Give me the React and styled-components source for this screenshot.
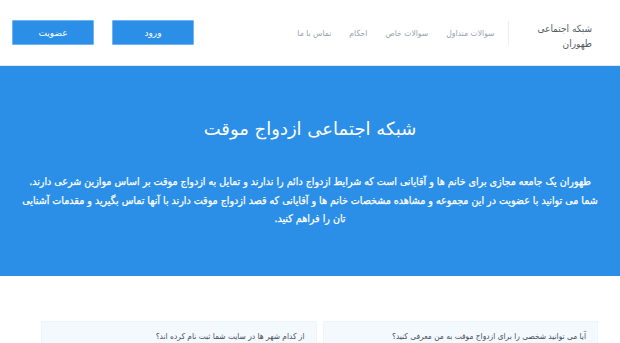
import React from "react";
import styled, { createGlobalStyle } from "styled-components";

const Global = createGlobalStyle`
  html, body { margin: 0; padding: 0; background: #fff; }
  body { font-family: "DejaVu Sans", "Noto Sans", sans-serif; direction: rtl; overflow: hidden; }
  * { box-sizing: border-box; }
`;

const Header = styled.header`
  height: 66px;
  display: flex;
  align-items: center;
  padding: 0 28px 0 12px;
  border-bottom: 1px solid #e3e6ea;
`;

const Logo = styled.div`
  display: flex;
  flex-direction: column;
  align-items: flex-start;
  font-family: "DejaVu Sans Condensed", "DejaVu Sans", sans-serif;
  font-size: 10px;
  line-height: 15px;
  color: #555b63;
  margin-top: 6px;
`;

const Divider = styled.div`
  width: 1px;
  height: 24px;
  background: #eceef1;
  margin: 0 29px 0 13px;
`;

const Nav = styled.nav`
  display: flex;
  align-items: center;
  gap: 18px;
`;

const NavLink = styled.a`
  font-family: "DejaVu Sans Condensed", "DejaVu Sans", sans-serif;
  font-size: 8.5px;
  color: #9aa3ad;
  text-decoration: none;
`;

const Actions = styled.div`
  margin-right: auto;
  display: flex;
  gap: 18px;
`;

const Button = styled.button`
  width: 82px;
  height: 25px;
  background: #2b8fe8;
  border: 1px solid #6fb3f0;
  border-radius: 1px;
  color: #fff;
  font-family: inherit;
  font-size: 9px;
  padding: 0;
`;

const Hero = styled.section`
  background: #2b8fe8;
  height: 210px;
  display: flex;
  flex-direction: column;
  align-items: center;
  padding: 51px 15px 0;
  color: #fff;
`;

const Title = styled.h1`
  margin: 0;
  font-size: 18px;
  font-weight: normal;
  line-height: 24px;
`;

const Lead = styled.p`
  margin: 31px 0 0;
  font-family: "DejaVu Sans Condensed", "DejaVu Sans", sans-serif;
  font-size: 10.6px;
  line-height: 18.5px;
  text-align: center;
  font-weight: normal;
  -webkit-text-stroke: 0.25px #fff;
`;

const Faq = styled.section`
  display: grid;
  grid-template-columns: 1fr 1fr;
  gap: 6px;
  padding: 45px 22px 0 41px;
`;

const Card = styled.div`
  background: #f4f9fe;
  border: 1px solid #eef4fb;
  padding: 9px 11px;
  font-family: "DejaVu Sans Condensed", "DejaVu Sans", sans-serif;
  font-size: 8.3px;
  color: #4a5159;
  height: 40px;
`;

export default function App() {
  return (
    <>
      <Global />
      <Header>
        <Logo>
          <span>شبکه اجتماعی</span>
          <span>طهوران</span>
        </Logo>
        <Divider />
        <Nav>
          <NavLink href="#">سوالات متداول</NavLink>
          <NavLink href="#">سوالات خاص</NavLink>
          <NavLink href="#">احکام</NavLink>
          <NavLink href="#">تماس با ما</NavLink>
        </Nav>
        <Actions>
          <Button>ورود</Button>
          <Button>عضویت</Button>
        </Actions>
      </Header>
      <Hero>
        <Title>شبکه اجتماعی ازدواج موقت</Title>
        <Lead>
          طهوران یک جامعه مجازی برای خانم ها و آقایانی است که شرایط ازدواج دائم را ندارند و تمایل به ازدواج موقت بر اساس موازین شرعی دارند.
          <br />
          شما می توانید با عضویت در این مجموعه و مشاهده مشخصات خانم ها و آقایانی که قصد ازدواج موقت دارند با آنها تماس بگیرید و مقدمات آشنایی تان را فراهم کنید.
        </Lead>
      </Hero>
      <Faq>
        <Card>آیا می توانید شخصی را برای ازدواج موقت به من معرفی کنید؟</Card>
        <Card>از کدام شهر ها در سایت شما ثبت نام کرده اند؟</Card>
      </Faq>
    </>
  );
}
